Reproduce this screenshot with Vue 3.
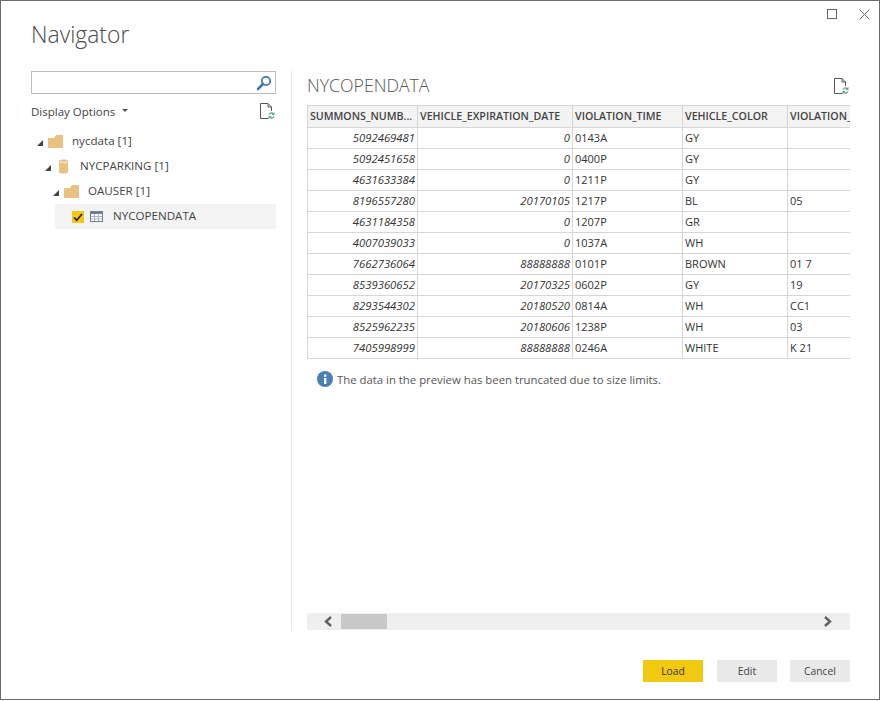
<script setup>
const columns = [
  { label: 'SUMMONS_NUMB...', cls: 'c1' },
  { label: 'VEHICLE_EXPIRATION_DATE', cls: 'c2' },
  { label: 'VIOLATION_TIME', cls: 'c3' },
  { label: 'VEHICLE_COLOR', cls: 'c4' },
  { label: 'VIOLATION_', cls: 'c5' },
]
const rows = [
  ['5092469481', '0', '0143A', 'GY', ''],
  ['5092451658', '0', '0400P', 'GY', ''],
  ['4631633384', '0', '1211P', 'GY', ''],
  ['8196557280', '20170105', '1217P', 'BL', '05'],
  ['4631184358', '0', '1207P', 'GR', ''],
  ['4007039033', '0', '1037A', 'WH', ''],
  ['7662736064', '88888888', '0101P', 'BROWN', '01 7'],
  ['8539360652', '20170325', '0602P', 'GY', '19'],
  ['8293544302', '20180520', '0814A', 'WH', 'CC1'],
  ['8525962235', '20180606', '1238P', 'WH', '03'],
  ['7405998999', '88888888', '0246A', 'WHITE', 'K 21'],
]
</script>

<template>
  <div class="window">
    <div class="controls">
      <span class="max"></span>
      <svg width="11" height="11" viewBox="0 0 11 11"><path d="M.5.5l10 10M10.500.5l-10 10" stroke="#666" stroke-width="1" fill="none" /></svg>
    </div>
    <h1 class="title">Navigator</h1>

    <div class="body">
      <aside class="left">
        <div class="search">
          <svg width="16" height="16" viewBox="0 0 16 16">
            <circle cx="10" cy="6" r="4.200" fill="none" stroke="#3f78b5" stroke-width="1.800" />
            <path d="M7 9L2 14" stroke="#3f78b5" stroke-width="2.600" stroke-linecap="round" />
          </svg>
        </div>
        <div class="options">
          <span>Display Options</span>
          <span class="caret"></span>
          <svg class="refresh" width="16" height="17" viewBox="0 0 16 17">
            <path d="M8.500 15.500H.5V.5H8L11.500 4V8M8 .5V4H11.500" fill="none" stroke="#555" />
            <path d="M8.500 12a3 3 0 0 1 5-2l1-1v3h-3l1-1a2 2 0 0 0-3.200 1zM14.500 13a3 3 0 0 1-5 2l-1 1v-3h3l-1 1a2 2 0 0 0 3.200-1z" fill="#5aa587" />
          </svg>
        </div>
        <ul class="tree">
          <li class="node l0">
            <span class="arrow"></span>
            <svg class="folder" width="15" height="13" viewBox="0 0 15 13"><path d="M0 3H6L8 0H15V13H0z" fill="#e9c282" /></svg>
            <span class="lbl">nycdata [1]</span>
          </li>
          <li class="node l1">
            <span class="arrow"></span>
            <svg class="db" width="9" height="15" viewBox="0 0 9 15"><path d="M0 2C0 0 9 0 9 2V13C9 15 0 15 0 13z" fill="#e9c282" /><path d="M.5 2.500C2 4 7 4 8.500 2.500" fill="none" stroke="#fbf3e2" /></svg>
            <span class="lbl lbl-db">NYCPARKING [1]</span>
          </li>
          <li class="node l2">
            <span class="arrow"></span>
            <svg class="folder" width="15" height="13" viewBox="0 0 15 13"><path d="M0 3H6L8 0H15V13H0z" fill="#e9c282" /></svg>
            <span class="lbl">OAUSER [1]</span>
          </li>
          <li class="node selected">
            <span class="check">
              <svg width="12" height="12" viewBox="0 0 12 12"><path d="M2 6.500L4.700 9.200L10 3" fill="none" stroke="#222" stroke-width="1.700" /></svg>
            </span>
            <svg class="grid" width="13" height="11" viewBox="0 0 13 11">
              <rect x=".5" y=".5" width="12" height="10" fill="#fff" stroke="#6f7f96" />
              <rect x=".5" y=".5" width="12" height="2.500" fill="#6f7f96" />
              <path d="M4.500 3v7M8.500 3v7M1 5.500h11M1 8h11" stroke="#9aa6b6" stroke-width=".8" fill="none" />
            </svg>
            <span class="lbl lbl-sel">NYCOPENDATA</span>
          </li>
        </ul>
      </aside>

      <section class="right">
        <div class="right-head">
          <h2 class="subtitle">NYCOPENDATA</h2>
          <svg class="refresh" width="16" height="17" viewBox="0 0 16 17">
            <path d="M8.500 15.500H.5V.5H8L11.500 4V8M8 .5V4H11.500" fill="none" stroke="#555" />
            <path d="M8.500 12a3 3 0 0 1 5-2l1-1v3h-3l1-1a2 2 0 0 0-3.200 1zM14.500 13a3 3 0 0 1-5 2l-1 1v-3h3l-1 1a2 2 0 0 0 3.200-1z" fill="#5aa587" />
          </svg>
        </div>
        <div class="table-wrap">
          <table class="data">
            <thead>
              <tr>
                <th v-for="c in columns" :key="c.cls" :class="c.cls">{{ c.label }}</th>
              </tr>
            </thead>
            <tbody>
              <tr v-for="r in rows" :key="r[0]">
                <td class="num">{{ r[0] }}</td>
                <td class="num">{{ r[1] }}</td>
                <td>{{ r[2] }}</td>
                <td>{{ r[3] }}</td>
                <td>{{ r[4] }}</td>
              </tr>
            </tbody>
          </table>
        </div>
        <div class="note">
          <svg width="16" height="16" viewBox="0 0 16 16">
            <circle cx="8" cy="8" r="8" fill="#4a7fb5" />
            <rect x="7" y="7" width="2.400" height="6" fill="#fff" />
            <rect x="7" y="3.500" width="2.400" height="2.200" fill="#fff" />
          </svg>
          <span class="note-text">The data in the preview has been truncated due to size limits.</span>
        </div>
        <div class="spacer"></div>
        <div class="scrollbar">
          <svg width="10" height="11" viewBox="0 0 10 11"><path d="M8 1L3 5.500L8 10" fill="none" stroke="#606060" stroke-width="2.400" /></svg>
          <span class="thumb"></span>
          <svg class="next" width="10" height="11" viewBox="0 0 10 11"><path d="M2 1L7 5.500L2 10" fill="none" stroke="#606060" stroke-width="2.400" /></svg>
        </div>
      </section>
    </div>

    <footer class="footer">
      <button class="btn primary">Load</button>
      <button class="btn edit">Edit</button>
      <button class="btn">Cancel</button>
    </footer>
  </div>
</template>

<style>
html, body { margin: 0; background: #fff; }
</style>

<style scoped>
.window {
  width: 880px;
  height: 700px;
  box-sizing: border-box;
  border: 1px solid #6b6b6b;
  background: #fff;
  display: flex;
  flex-direction: column;
  font-family: "Open Sans", "Noto Sans", sans-serif;
  font-size: 11px;
  color: #333;
  position: relative;
}
.controls {
  position: absolute;
  top: 8px;
  right: 9px;
  display: flex;
  align-items: flex-start;
  gap: 22px;
}
.max {
  width: 8px;
  height: 8px;
  border: 1px solid #666;
}
.title {
  margin: 19px 0 0 30px;
  font-size: 22.900px;
  line-height: 30px;
  font-weight: 300;
  color: #4a4a4a;
}
.body {
  display: flex;
  margin-top: 21px;
  height: 559px;
  padding-left: 30px;
}
.left {
  width: 245px;
  padding-right: 15px;
  border-right: 1px solid #e6e6e6;
}
.search {
  height: 23px;
  box-sizing: border-box;
  border: 1px solid #bdbdbd;
  display: flex;
  align-items: center;
  justify-content: flex-end;
  padding-right: 3px;
}
.options {
  display: flex;
  align-items: center;
  margin-top: 8px;
  height: 19px;
  font-size: 11.500px;
  color: #444;
}
.caret {
  width: 0;
  height: 0;
  margin-left: 7px;
  margin-bottom: 2px;
  border-left: 3px solid transparent;
  border-right: 3px solid transparent;
  border-top: 3px solid #555;
}
.options .refresh { margin-left: auto; }
.tree {
  list-style: none;
  margin: 8px 0 0;
  padding: 0;
}
.node {
  display: flex;
  align-items: center;
  height: 25px;
  font-size: 11.600px;
  color: #444;
}
.l0 { padding-left: 6px; }
.l1 { padding-left: 14px; }
.l2 { padding-left: 22px; }
.arrow {
  width: 0;
  height: 0;
  margin-top: 3px;
  border-left: 6px solid transparent;
  border-bottom: 6px solid #444;
}
.folder { margin-left: 5px; }
.db { margin-left: 8px; }
.lbl { margin-left: 9px; padding-bottom: 2px; }
.lbl-db { margin-left: 12px; }
.selected {
  margin-left: 24px;
  padding-left: 17px;
  background: #f3f3f3;
}
.check {
  width: 12px;
  height: 12px;
  background: #f2c811;
  display: flex;
}
.grid { margin-left: 6px; }
.lbl-sel { margin-left: 10px; }
.right {
  flex: 1;
  min-width: 0;
  margin: 0 29px 0 15px;
  display: flex;
  flex-direction: column;
}
.right-head {
  display: flex;
  justify-content: space-between;
  height: 34px;
}
.subtitle {
  margin: 0;
  font-size: 17.700px;
  line-height: 28px;
  font-weight: 300;
  color: #555;
}
.right-head .refresh { margin-top: 7px; }
.table-wrap {
  overflow: hidden;
}
.data {
  table-layout: fixed;
  border-collapse: collapse;
  width: 700px;
  font-size: 11px;
  color: #333;
}
.data th, .data td {
  border: 1px solid #d6d6d6;
  padding: 0 2px 2px;
  height: 21px;
  box-sizing: border-box;
  white-space: nowrap;
  overflow: hidden;
  text-align: left;
}
.data th {
  height: 22px;
  background: #f3f3f3;
  font-size: 10.650px;
  font-weight: 600;
  color: #444;
}
.data .num {
  text-align: right;
  font-size: 11.300px;
  font-style: italic;
}
.c1 { width: 110px; }
.c2 { width: 155px; }
.c3 { width: 110px; }
.c4 { width: 105px; }
.c5 { width: 220px; }
.note {
  display: flex;
  align-items: center;
  gap: 4px;
  margin: 11px 0 0 10px;
  font-size: 11.350px;
  color: #555;
}
.note-text { padding-top: 2px; }
.spacer { flex: 1; }
.scrollbar {
  height: 17px;
  background: #efefef;
  display: flex;
  align-items: center;
  padding: 0 17px 0 16px;
}
.thumb {
  width: 46px;
  height: 15px;
  margin-left: 8px;
  background: #c8c8c8;
}
.next { margin-left: auto; }
.footer {
  display: flex;
  justify-content: flex-end;
  gap: 14px;
  padding: 30px 29px 0 0;
}
.btn {
  width: 60px;
  height: 22px;
  border: 0;
  padding: 0;
  background: #e9e9e9;
  font: inherit;
  font-size: 10.300px;
  color: #444;
}
.edit { margin-right: -1px; }
.primary {
  background: #f2c811;
  color: #333;
}
</style>
